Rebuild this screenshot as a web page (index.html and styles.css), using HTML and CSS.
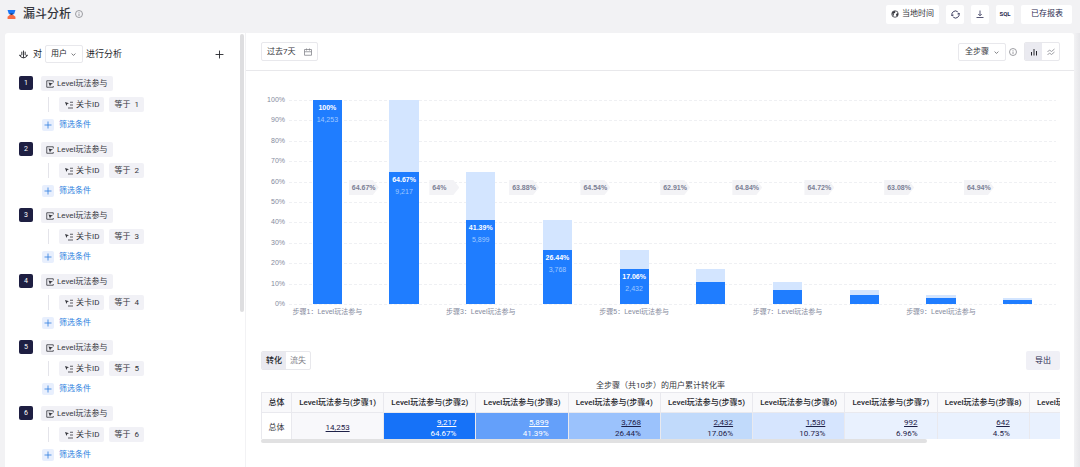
FILE: index.html
```html
<!DOCTYPE html>
<html lang="zh-CN">
<head>
<meta charset="utf-8">
<title>漏斗分析</title>
<link rel="stylesheet" href="styles.css">
</head>
<body>
<svg class="sprite" aria-hidden="true">
  <symbol id="info" viewBox="0 0 16 16"><circle cx="8" cy="8" r="7"/><path d="M8 7v5M8 4v1.5"/></symbol>
  <symbol id="plus" viewBox="0 0 16 16"><path d="M8 1v14M1 8h14"/></symbol>
  <symbol id="down" viewBox="0 0 16 16"><path d="M2 5l6 6 6-6"/></symbol>
  <symbol id="event" viewBox="0 0 16 16"><path d="M14.500 5V1.500h-13v13H14.500V12"/><path class="solid" d="M5 5l9 2-4 2-2 4z"/></symbol>
  <symbol id="prop" viewBox="0 0 16 16"><path class="solid" d="M0 2l8 2.500-3.500 1.500L3 10z"/><path d="M10 2.500h6M10 8h6M6 14h10"/></symbol>
</svg>
<header class="topbar">
  <svg class="logo" viewBox="0 0 16 16" aria-hidden="true"><path fill="#1976f5" d="M1 0h14l-2 6-3 3H6L3 6z"/><path fill="#f66b43" d="M6 8h4l5 4v4H1v-4z"/><path fill="#24284e" d="M5 6h6L8 9z"/></svg>
  <h1 class="title">漏斗分析</h1>
  <svg class="icon muted"><use href="#info"/></svg>
  <div class="actions">
    <button class="btn local"><svg class="icon" viewBox="0 0 16 16"><circle cx="8" cy="8" r="6.500"/><path class="solid" d="M2 5l4-3 3 1-1 3-3 1 1 3-2 2zM14 6l-4 2 1 5 3-2z"/></svg>当地时间</button>
    <button class="btn square" aria-label="刷新"><svg class="icon large" viewBox="0 0 16 16"><path d="M2 10A6.200 6.200 0 0 1 12 3.300M14 6A6.200 6.200 0 0 1 4 12.700M0 8l2 2.500L4.500 9M16 8l-2-2.500L11.500 7"/></svg></button>
    <button class="btn square" aria-label="下载"><svg class="icon" viewBox="0 0 16 16"><path d="M8 1v10M4.500 8L8 11.500 11.500 8M1 15h14"/></svg></button>
    <button class="btn square sql">SQL</button>
    <button class="btn saved">已存报表</button>
  </div>
</header>
<main class="workspace">
  <aside class="sidebar">
    <div class="subject">
      <svg class="icon large" viewBox="0 0 16 16" aria-hidden="true"><path d="M1 9c1 3 3 4 7 5 4-1 6-2 7-5M8 1v13M5 3v6M11 3v6M1 9l3 1M15 9l-3 1"/></svg>
      <label for="entity">对</label>
      <span class="picker"><select id="entity"><option>用户</option></select><svg class="icon chevron"><use href="#down"/></svg></span>
      <span>进行分析</span>
      <button class="add" aria-label="添加步骤"><svg class="icon large"><use href="#plus"/></svg></button>
    </div>
    <ol class="steps">
      <li class="step"><span class="number">1</span><button class="chip"><svg class="icon"><use href="#event"/></svg>Level玩法参与</button><div class="filter"><button class="chip"><svg class="icon"><use href="#prop"/></svg>关卡ID</button><button class="chip">等于 &nbsp;1</button></div><button class="condition"><span class="plus"><svg class="icon"><use href="#plus"/></svg></span>筛选条件</button></li>
      <li class="step"><span class="number">2</span><button class="chip"><svg class="icon"><use href="#event"/></svg>Level玩法参与</button><div class="filter"><button class="chip"><svg class="icon"><use href="#prop"/></svg>关卡ID</button><button class="chip">等于 &nbsp;2</button></div><button class="condition"><span class="plus"><svg class="icon"><use href="#plus"/></svg></span>筛选条件</button></li>
      <li class="step"><span class="number">3</span><button class="chip"><svg class="icon"><use href="#event"/></svg>Level玩法参与</button><div class="filter"><button class="chip"><svg class="icon"><use href="#prop"/></svg>关卡ID</button><button class="chip">等于 &nbsp;3</button></div><button class="condition"><span class="plus"><svg class="icon"><use href="#plus"/></svg></span>筛选条件</button></li>
      <li class="step"><span class="number">4</span><button class="chip"><svg class="icon"><use href="#event"/></svg>Level玩法参与</button><div class="filter"><button class="chip"><svg class="icon"><use href="#prop"/></svg>关卡ID</button><button class="chip">等于 &nbsp;4</button></div><button class="condition"><span class="plus"><svg class="icon"><use href="#plus"/></svg></span>筛选条件</button></li>
      <li class="step"><span class="number">5</span><button class="chip"><svg class="icon"><use href="#event"/></svg>Level玩法参与</button><div class="filter"><button class="chip"><svg class="icon"><use href="#prop"/></svg>关卡ID</button><button class="chip">等于 &nbsp;5</button></div><button class="condition"><span class="plus"><svg class="icon"><use href="#plus"/></svg></span>筛选条件</button></li>
      <li class="step"><span class="number">6</span><button class="chip"><svg class="icon"><use href="#event"/></svg>Level玩法参与</button><div class="filter"><button class="chip"><svg class="icon"><use href="#prop"/></svg>关卡ID</button><button class="chip">等于 &nbsp;6</button></div><button class="condition"><span class="plus"><svg class="icon"><use href="#plus"/></svg></span>筛选条件</button></li>
    </ol>
    <div class="side-thumb"></div>
  </aside>
  <section class="report">
    <div class="toolbar">
      <button class="field date">过去7天<svg class="icon muted" viewBox="0 0 16 16"><path d="M1 3h14v11.500H1zM1 7.500h14M5 1v4M11 1v4"/></svg></button>
      <span class="picker wide"><select aria-label="步骤"><option>全步骤</option></select><svg class="icon chevron"><use href="#down"/></svg></span>
      <svg class="icon muted"><use href="#info"/></svg>
      <div class="group">
        <button class="on" aria-label="柱状图"><svg class="icon" viewBox="0 0 16 16"><path class="thick" d="M3 8v7M8 2v13M13 6v9"/></svg></button>
        <button aria-label="趋势图"><svg class="icon" viewBox="0 0 16 16"><path d="M1 8l4-4 4 3 6-5M1 14l4-4 4 3 6-5"/></svg></button>
      </div>
    </div>
    <div class="chart">
      <div class="scale"><span>100%</span><span>90%</span><span>80%</span><span>70%</span><span>60%</span><span>50%</span><span>40%</span><span>30%</span><span>20%</span><span>10%</span><span>0%</span></div>
      <div class="plot">
        <div class="lines"><i></i><i></i><i></i><i></i><i></i><i></i><i></i><i></i><i></i><i></i><i></i></div>
        <div class="bars">
          <div class="bar" style="height:100%"><div class="fill" style="height:100%"><b>100%</b><span>14,253</span></div></div>
          <div class="bar" style="height:100%"><div class="fill" style="height:64.67%"><b>64.67%</b><span>9,217</span></div></div>
          <div class="bar" style="height:64.67%"><div class="fill" style="height:64%"><b>41.39%</b><span>5,899</span></div></div>
          <div class="bar" style="height:41.39%"><div class="fill" style="height:63.88%"><b>26.44%</b><span>3,768</span></div></div>
          <div class="bar" style="height:26.44%"><div class="fill" style="height:64.54%"><b>17.06%</b><span>2,432</span></div></div>
          <div class="bar" style="height:17.06%"><div class="fill" style="height:62.91%"></div></div>
          <div class="bar" style="height:10.73%"><div class="fill" style="height:64.84%"></div></div>
          <div class="bar" style="height:6.96%"><div class="fill" style="height:64.72%"></div></div>
          <div class="bar" style="height:4.5%"><div class="fill" style="height:63.08%"></div></div>
          <div class="bar" style="height:2.84%"><div class="fill" style="height:64.94%"></div></div>
        </div>
        <span class="rate" style="left:7.800%">64.67%</span>
        <span class="rate" style="left:18.300%">64%</span>
        <span class="rate" style="left:28.700%">63.88%</span>
        <span class="rate" style="left:38%">64.54%</span>
        <span class="rate" style="left:48.400%">62.91%</span>
        <span class="rate" style="left:57.800%">64.84%</span>
        <span class="rate" style="left:67.200%">64.72%</span>
        <span class="rate" style="left:77.600%">63.08%</span>
        <span class="rate" style="left:88%">64.94%</span>
      </div>
      <div class="names"><span>步骤1：Level玩法参与</span><span></span><span>步骤3：Level玩法参与</span><span></span><span>步骤5：Level玩法参与</span><span></span><span>步骤7：Level玩法参与</span><span></span><span>步骤9：Level玩法参与</span><span></span></div>
    </div>
    <div class="result-bar">
      <div class="group text"><button class="on">转化</button><button>流失</button></div>
      <button class="export">导出</button>
    </div>
    <p class="caption" id="caption">全步骤（共10步）的用户累计转化率</p>
    <div class="table-view">
      <table aria-labelledby="caption">
        <thead><tr><th class="first">总体</th><th>Level玩法参与(步骤1)</th><th>Level玩法参与(步骤2)</th><th>Level玩法参与(步骤3)</th><th>Level玩法参与(步骤4)</th><th>Level玩法参与(步骤5)</th><th>Level玩法参与(步骤6)</th><th>Level玩法参与(步骤7)</th><th>Level玩法参与(步骤8)</th><th>Level玩法参与(步骤9)</th></tr></thead>
        <tbody><tr><td class="total">总体</td><td class="base"><a href="#">14,253</a></td><td class="h1"><a href="#">9,217</a><br>64.67%</td><td class="h2"><a href="#">5,899</a><br>41.39%</td><td class="h3"><a href="#">3,768</a><br>26.44%</td><td class="h4"><a href="#">2,432</a><br>17.06%</td><td class="h5"><a href="#">1,530</a><br>10.73%</td><td class="h6"><a href="#">992</a><br>6.96%</td><td class="h6"><a href="#">642</a><br>4.5%</td><td class="h6"></td></tr></tbody>
      </table>
    </div>
    <div class="table-thumb"></div>
  </section>
</main>
</body>
</html>
```

FILE: styles.css
```css
* { box-sizing: border-box; }
html { height: 100%; }
body {
  margin: 0;
  height: 100%;
  display: flex;
  flex-direction: column;
  overflow: hidden;
  background: #f2f2f4;
  color: #35363c;
  font: 8px/12px Roboto, "Noto Sans CJK SC", sans-serif;
}
button, select { font: inherit; color: inherit; border: 0; margin: 0; padding: 0; background: none; }
button { display: inline-flex; align-items: center; justify-content: center; white-space: nowrap; }
.sprite { position: absolute; width: 0; height: 0; }
.icon { width: 8px; height: 8px; flex: none; fill: none; stroke: currentColor; stroke-width: 1.6; }
.icon.large { width: 9px; height: 9px; }
.solid { fill: currentColor; stroke: none; }
.thick { stroke-width: 2; }
.muted { color: #85868d; }

.topbar { display: flex; align-items: center; height: 33px; padding: 0 8px 5px 7px; flex: none; }
.logo { width: 9px; height: 9px; }
.title { margin: 0 4px 0 7px; font-size: 12px; line-height: 18px; font-weight: 500; color: #35363c; }
.actions { margin-left: auto; display: flex; gap: 7px; color: #2a2b50; }
.btn { height: 19px; border-radius: 2px; background: #fff; }
.local { padding: 0 5px; gap: 3px; color: #35363c; }
.square { width: 18px; }
.sql { font-size: 6px; font-weight: 700; }
.saved { padding: 0 9px 0 10px; }

.workspace { flex: 1; display: flex; min-height: 0; gap: 1px; padding: 0 6px 0 5px; background: linear-gradient(to left, #e7e7ea, #f2f2f4 6px); }
.sidebar { position: relative; width: 240px; flex: none; overflow: hidden; background: #fff; border-radius: 3px 0 0 0; padding: 12px 0 0 14px; }
.side-thumb { position: absolute; right: 1px; top: 1px; width: 4px; height: 64%; border-radius: 2px; background: #dedee0; }
.subject { display: flex; align-items: center; gap: 5px; height: 18px; font-size: 9px; color: #26272d; }
.subject .picker { margin-left: -2px; margin-right: -2px; }
.picker { position: relative; display: inline-flex; font-size: 8px; }
.picker select { appearance: none; height: 18px; padding: 0 15px 0 5px; border: 1px solid #e8e8ec; border-radius: 2px; background: #fff; }
.picker.wide select { padding: 0 16px 0 6px; }
.chevron { position: absolute; right: 7px; top: 7px; width: 5px; height: 5px; stroke-width: 2; pointer-events: none; }
.add { margin-left: auto; margin-right: 21px; }

.steps { list-style: none; margin: 13px 0 0; padding: 0; display: grid; gap: 11px; }
.step { display: grid; grid-template-columns: 14px auto; column-gap: 8px; justify-items: start; }
.number { width: 14px; height: 14px; border-radius: 2px; background: #1e1f42; color: #fff; font-size: 7px; line-height: 14px; text-align: center; }
.chip { height: 15px; padding: 0 5px; gap: 3px; border-radius: 2px; background: #f1f1f6; }
.filter { grid-column: 2; display: flex; gap: 5px; margin: 6px 0 7px 7px; padding-left: 10px; border-left: 1px solid #e4e4ea; }
.filter .icon { margin-left: 1px; }
.condition { grid-column: 2; gap: 5px; margin-left: 1px; color: #2d7fe0; }
.plus { display: flex; align-items: center; justify-content: center; width: 12px; height: 12px; border-radius: 2px; background: #e8effd; }

.report { flex: 1; min-width: 0; background: #fff; border-radius: 0 3px 0 0; }
.toolbar { display: flex; align-items: center; height: 38px; padding: 0 14px 0 15px; border-bottom: 1px solid #e8e8eb; }
.field { height: 19px; padding: 0 5px; gap: 8px; border: 1px solid #e8e8ec; border-radius: 2px; }
.date { margin-right: auto; }
.toolbar .picker { margin-right: 3px; }
.group { display: flex; height: 19px; border: 1px solid #e8e8ec; border-radius: 2px; overflow: hidden; }
.toolbar .group { margin-left: 7px; }
.group button { width: 17px; color: #85868d; }
.group.text button { width: 24px; }
.group .on { background: #eaeaf0; color: #26272d; }
.group.text .on { font-weight: 500; }

.chart { display: grid; grid-template-columns: 24px 1fr; column-gap: 4px; padding: 29px 18px 0 15px; font: 7px/12px "Liberation Sans", "Noto Sans CJK SC", sans-serif; color: #858a9d; }
.scale { height: 216px; margin: -6px 0; display: flex; flex-direction: column; justify-content: space-between; text-align: right; }
.plot { position: relative; height: 204px; }
.lines { height: 205px; display: flex; flex-direction: column; justify-content: space-between; }
.lines i { height: 1px; background: repeating-linear-gradient(to right, #eff0f3 0 3px, transparent 3px 5px); }
.bars { position: absolute; inset: 0; display: grid; grid-template-columns: repeat(10, 1fr); align-items: end; justify-items: center; }
.bar { width: 38%; display: flex; align-items: end; background: #d3e5ff; }
.fill { width: 100%; display: flex; flex-direction: column; align-items: center; background: #1f7dff; color: #9fc8ff; }
.fill b { margin-top: 2px; color: #fff; }
.rate { position: absolute; top: 80px; width: 30px; height: 15px; padding-left: 3px; line-height: 15px; font-weight: 700; color: #7b8095; background: #f3f3f6; clip-path: polygon(0 0, 24px 0, 100% 50%, 24px 100%, 0 100%); }
.names { grid-column: 2; display: grid; grid-template-columns: repeat(10, 1fr); margin-top: 2px; white-space: nowrap; }
.names span { display: flex; justify-content: center; min-width: 0; }

.result-bar { display: flex; justify-content: space-between; margin: 33px 14px 0 15px; }
.export { height: 19px; padding: 0 9px; border-radius: 2px; background: #f0f0f6; color: #2a2b50; }
.caption { margin: 10px 14px 0 15px; text-align: center; }
.table-view { margin: 0 14px 0 15px; overflow: hidden; }
table { width: 861px; table-layout: fixed; border-collapse: separate; border-spacing: 0; border-top: 1px solid #e9e9ee; border-left: 1px solid #e9e9ee; }
th, td { padding: 0; border-right: 1px solid #e9e9ee; }
th { height: 20px; border-bottom: 1px solid #e9e9ee; background: #f9f9fb; font-weight: 500; color: #26272d; white-space: nowrap; text-align: center; }
th.first { width: 30px; }
td { height: 26px; padding: 4px 19px 0 0; line-height: 11px; text-align: right; color: #1e2148; }
td a { color: inherit; }
td.total { padding: 3px 0 0; text-align: center; color: #35363c; }
td.base { padding: 3px 0 0; text-align: center; background: #f8f8fb; }
td.h1 { background: #1672f8; color: #fff; }
td.h2 { background: #64a0fa; color: #fff; }
td.h3 { background: #9bc2fc; }
td.h4 { background: #c1dafb; }
td.h5 { background: #d6e5fe; }
td.h6 { background: #e9f1fe; }
.table-thumb { width: calc((100% - 29px) * 0.834); height: 4px; margin-left: 15px; border-radius: 2px; background: #e1e1e2; }
```
